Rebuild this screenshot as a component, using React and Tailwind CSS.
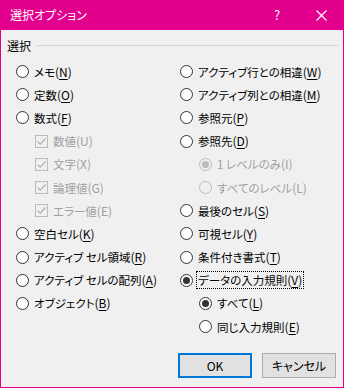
import React from 'react';

const font = { fontFamily: '"Noto Sans CJK JP", "Noto Sans", sans-serif' };

// label: Japanese text plus an access key in brackets, underlined when enabled
const Label = ({ text, k, disabled }) => (
  <span className={`whitespace-nowrap ${disabled ? 'text-[#a0a0a0]' : 'text-black'}`}>
    {text}
    <span className="text-[12px]">
      (<span className={disabled ? '' : 'underline underline-offset-2'}>{k}</span>)
    </span>
  </span>
);

const Radio = ({ checked, disabled }) => (
  <span
    className={`w-[13px] h-[13px] rounded-full border flex items-center justify-center shrink-0 ${
      disabled ? 'border-[#bcbcbc] bg-[#f0f0f0]' : 'border-[#333] bg-white'
    }`}
  >
    {checked && (
      <span className={`w-[7px] h-[7px] rounded-full ${disabled ? 'bg-[#bcbcbc]' : 'bg-[#333]'}`} />
    )}
  </span>
);

const Check = () => (
  <span className="w-[13px] h-[13px] border border-[#bcbcbc] bg-[#f0f0f0] flex items-center justify-center shrink-0">
    <svg width="11" height="11" viewBox="0 0 11 11">
      <path d="M1.5 5.5 L4.2 8.2 L9.5 2.5" fill="none" stroke="#b0b0b0" strokeWidth="1.2" />
    </svg>
  </span>
);

const Row = ({ type = 'radio', checked, disabled, indent = 0, focus, text, k }) => (
  <div className="h-[23.2px] flex items-center gap-[5px]" style={{ paddingLeft: indent }}>
    {type === 'check' ? <Check /> : <Radio checked={checked} disabled={disabled} />}
    <span className={focus ? 'outline-1 outline-dotted outline-black px-[1px] -ml-[1px] leading-[15px]' : 'leading-[15px]'}>
      <Label text={text} k={k} disabled={disabled} />
    </span>
  </div>
);

const left = [
  { text: 'メモ', k: 'N' },
  { text: '定数', k: 'O' },
  { text: '数式', k: 'F' },
  { type: 'check', disabled: true, indent: 19, text: '数値', k: 'U' },
  { type: 'check', disabled: true, indent: 19, text: '文字', k: 'X' },
  { type: 'check', disabled: true, indent: 19, text: '論理値', k: 'G' },
  { type: 'check', disabled: true, indent: 19, text: 'エラー値', k: 'E' },
  { text: '空白セル', k: 'K' },
  { text: 'アクティブ セル領域', k: 'R' },
  { text: 'アクティブ セルの配列', k: 'A' },
  { text: 'オブジェクト', k: 'B' },
];

const right = [
  { text: 'アクティブ行との相違', k: 'W' },
  { text: 'アクティブ列との相違', k: 'M' },
  { text: '参照元', k: 'P' },
  { text: '参照先', k: 'D' },
  { disabled: true, checked: true, indent: 19, text: '1 レベルのみ', k: 'I' },
  { disabled: true, indent: 19, text: 'すべてのレベル', k: 'L' },
  { text: '最後のセル', k: 'S' },
  { text: '可視セル', k: 'Y' },
  { text: '条件付き書式', k: 'T' },
  { checked: true, focus: true, text: 'データの入力規則', k: 'V' },
  { checked: true, indent: 19, text: 'すべて', k: 'L' },
  { indent: 19, text: '同じ入力規則', k: 'E' },
];

export default function App() {
  return (
    <div
      className="w-[344px] h-[388px] bg-[#f0f0f0] border border-[#e3008c] flex flex-col text-[11.5px] [font-feature-settings:'palt'] text-black overflow-hidden"
      style={font}
    >
      {/* Title bar */}
      <div className="h-[30px] bg-[#e3008c] flex items-center shrink-0 -mt-[1px] -mx-[1px]">
        <span className="pl-[10px] text-white text-[12px] flex-1">選択オプション</span>
        <span className="text-white text-[13px] w-[46px] text-center pl-[4px]">?</span>
        <span className="w-[46px] flex justify-center">
          <svg width="11" height="11" viewBox="0 0 11 11">
            <path d="M0.5 0.5 L10.5 10.5 M10.5 0.5 L0.5 10.5" stroke="#fff" strokeWidth="1.2" />
          </svg>
        </span>
      </div>

      {/* Group header */}
      <div className="flex items-center gap-[5px] pl-[6px] pr-[5px] mt-[7px] h-[17px] text-[12px]">
        <span>選択</span>
        <span className="flex-1 h-px bg-[#d5d5d5]" />
      </div>

      {/* Options */}
      <div className="grid grid-cols-[164px_1fr] pl-[15px] mt-[6px]">
        <div className="flex flex-col">
          {left.map((r, i) => (
            <Row key={i} {...r} />
          ))}
        </div>
        <div className="flex flex-col">
          {right.map((r, i) => (
            <Row key={i} {...r} />
          ))}
        </div>
      </div>

      {/* Buttons */}
      <div className="flex justify-end gap-[10px] pr-[7px] mt-auto mb-[9px] text-[12px]">
        <button className="w-[74px] h-[25px] border-2 border-[#0078d7] bg-[#e1e1e1]">OK</button>
        <button className="w-[74px] h-[25px] border border-[#adadad] bg-[#e1e1e1]">キャンセル</button>
      </div>
    </div>
  );
}
